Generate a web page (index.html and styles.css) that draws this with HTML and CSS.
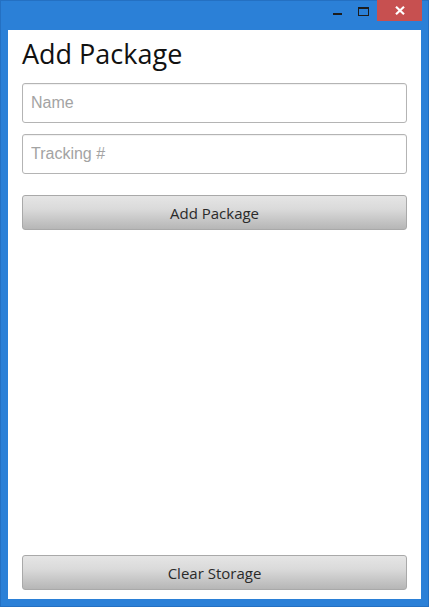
FILE: index.html
```html
<!DOCTYPE html>
<html>
<head>
<meta charset="utf-8">
<link rel="stylesheet" href="styles.css">
</head>
<body>
<div class="window">
  <div class="titlebar">
    <div class="ctl ctl-min"><span class="min-glyph"></span></div>
    <div class="ctl ctl-max"><span class="max-glyph"></span></div>
    <div class="ctl ctl-close">
      <svg width="10" height="9" viewBox="0 0 10 9"><path d="M1 0.8 L9 8.2 M9 0.8 L1 8.2" stroke="#fff" stroke-width="2.2" fill="none"/></svg>
    </div>
  </div>
  <div class="client">
    <h1 class="title">Add Package</h1>
    <input class="field" type="text" placeholder="Name">
    <input class="field field-second" type="text" placeholder="Tracking #">
    <button class="btn btn-add">Add Package</button>
    <div class="spacer"></div>
    <button class="btn">Clear Storage</button>
  </div>
</div>
</body>
</html>
```
FILE: styles.css
```css
html, body {
  margin: 0;
  padding: 0;
}
body {
  width: 429px;
  height: 607px;
  overflow: hidden;
}
.window {
  box-sizing: border-box;
  width: 429px;
  height: 607px;
  background: #2b80d7;
  border: 1px solid #2470c2;
  padding: 0 7px 7px 7px;
  display: flex;
  flex-direction: column;
}
.titlebar {
  height: 29px;
  display: flex;
  justify-content: flex-end;
  align-items: flex-start;
  margin-right: -1px;
}
.ctl {
  display: flex;
  align-items: center;
  justify-content: center;
  margin-top: -1px;
  height: 21px;
}
.ctl-min { width: 26px; }
.ctl-max { width: 27px; }
.ctl-close {
  width: 45px;
  background: #c75050;
}
.min-glyph {
  display: block;
  width: 9px;
  height: 2px;
  background: #1c1c1c;
  margin-top: 7px;
}
.max-glyph {
  display: block;
  box-sizing: border-box;
  width: 11px;
  height: 9px;
  border: 1px solid #1c1c1c;
  border-top-width: 2px;
  margin-top: 1px;
}
.client {
  flex: 1;
  background: #ffffff;
  padding: 6px 14px 9px 14px;
  display: flex;
  flex-direction: column;
}
.title {
  margin: 0 0 11px 0;
  font-family: "Open Sans", sans-serif;
  font-weight: 400;
  font-size: 27px;
  line-height: 36px;
  color: #111;
}
.field {
  box-sizing: border-box;
  height: 40px;
  width: 100%;
  margin: 0;
  border: 1px solid #b4b4b4;
  border-radius: 3px;
  box-shadow: inset 0 1px 1px rgba(0,0,0,0.06);
  padding: 0 8px;
  font-family: "Liberation Sans", Arial, sans-serif;
  font-size: 16px;
  color: #333;
  background: #fff;
  outline: none;
}
.field::placeholder {
  color: #a3a3a3;
}
.field-second {
  margin-top: 11px;
}
.btn {
  box-sizing: border-box;
  height: 35px;
  width: 100%;
  margin: 0;
  border: 1px solid #a9a9a9;
  border-radius: 3px;
  background: linear-gradient(to bottom, #e5e5e5 0%, #dadada 40%, #b6b6b6 100%);
  font-family: "Open Sans", sans-serif;
  font-size: 15px;
  color: #2a2a2a;
  padding: 0;
}
.btn-add {
  margin-top: 21px;
}
.spacer {
  flex: 1;
}
```
